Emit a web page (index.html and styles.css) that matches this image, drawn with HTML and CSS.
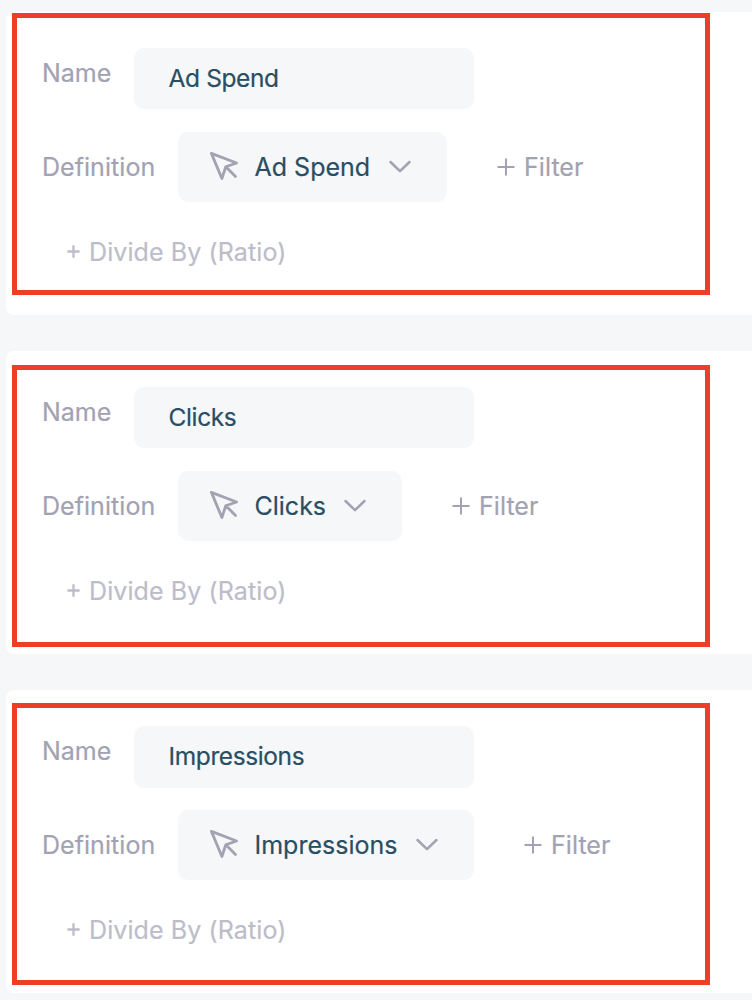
FILE: index.html
```
<!DOCTYPE html>
<html lang="en">
<head>
<meta charset="utf-8">
<title>Metrics</title>
<link rel="stylesheet" href="styles.css">
</head>
<body>
<svg width="0" height="0" class="defs">
<symbol id="cursor" viewBox="0 0 32 32"><path d="M3.4 3.4 28.6 13 17.8 16.7 13.9 28.5ZM17.8 16.7 27.5 26.4"/></symbol>
<symbol id="chevron" viewBox="0 0 24 16"><path d="M2.5 3 12 12.2 21.5 3"/></symbol>
<symbol id="plus" viewBox="0 0 18 18"><path d="M9 .5v17M.5 9h17"/></symbol>
</svg>
<main class="list">
<section class="card">
<div class="outline"></div>
<div class="row name-row"><span class="label name">Name</span><div class="input">Ad Spend</div></div>
<div class="row def-row"><span class="label definition">Definition</span><div class="chip chip-spend"><svg class="cursor"><use href="#cursor"/></svg><span class="chip-text">Ad Spend</span><svg class="chevron"><use href="#chevron"/></svg></div><div class="filter"><svg class="plus"><use href="#plus"/></svg><span>Filter</span></div></div>
<div class="ratio"><svg class="plus-small"><use href="#plus"/></svg><span>Divide By (Ratio)</span></div>
</section>
<section class="card">
<div class="outline outline-mid"></div>
<div class="row name-row"><span class="label name">Name</span><div class="input">Clicks</div></div>
<div class="row def-row"><span class="label definition">Definition</span><div class="chip chip-clicks"><svg class="cursor"><use href="#cursor"/></svg><span class="chip-text">Clicks</span><svg class="chevron"><use href="#chevron"/></svg></div><div class="filter"><svg class="plus"><use href="#plus"/></svg><span>Filter</span></div></div>
<div class="ratio"><svg class="plus-small"><use href="#plus"/></svg><span>Divide By (Ratio)</span></div>
</section>
<section class="card">
<div class="outline outline-last"></div>
<div class="row name-row"><span class="label name">Name</span><div class="input input-last">Impressions</div></div>
<div class="row def-row"><span class="label definition">Definition</span><div class="chip chip-impressions"><svg class="cursor"><use href="#cursor"/></svg><span class="chip-text">Impressions</span><svg class="chevron"><use href="#chevron"/></svg></div><div class="filter"><svg class="plus"><use href="#plus"/></svg><span>Filter</span></div></div>
<div class="ratio"><svg class="plus-small"><use href="#plus"/></svg><span>Divide By (Ratio)</span></div>
</section>
</main>
</body>
</html>
```
FILE: styles.css
```
* { box-sizing: border-box; }
body { margin: 0; background: #f5f7f9; font-family: Inter, "Liberation Sans", sans-serif; font-size: 25px; line-height: 30px; color: #a2a2b3; -webkit-text-stroke: 0.2px currentColor; overflow: hidden; white-space: nowrap; }
.defs { position: absolute; }
svg { fill: none; stroke: #a2a2b3; flex: none; }
.list { height: 1000px; padding: 12px 0 0 6px; display: flex; flex-direction: column; gap: 36px; }
.card { position: relative; flex: none; height: 303px; padding: 36px 0 0 36px; background: #fff; border-radius: 8px 0 0 8px; }
.outline { position: absolute; left: 6px; top: 1px; width: 698px; height: 282px; border: 5px solid #eb4026; }
.outline-mid { top: 14px; }
.outline-last { top: 13px; }
.row { display: flex; align-items: center; }
.name-row { height: 61px; align-items: flex-start; }
.name { width: 92px; padding-top: 10px; }
.input { width: 340px; height: 61px; padding: 15px 0 0 34.6px; border-radius: 10px; background: #f5f7f9; color: #294e63; font-size: 24.5px; letter-spacing: -0.4px; }
.input-last { height: 62px; }
.def-row { height: 70px; margin-top: 23px; }
.definition { width: 136px; letter-spacing: 0.05px; }
.chip { display: flex; align-items: center; height: 70px; padding-left: 30px; border-radius: 10px; background: #f5f7f9; color: #294e63; }
.chip-spend { width: 269px; }
.chip-clicks { width: 224px; }
.chip-impressions { width: 296px; }
.cursor { width: 32px; height: 32px; margin-bottom: 2px; stroke-width: 2.8; stroke-linejoin: round; stroke-linecap: round; }
.chip-text { margin-left: 14.5px; }
.chevron { width: 24px; height: 16px; margin: 0 35px 0 auto; stroke-width: 2.5; stroke-linecap: round; stroke-linejoin: round; }
.filter { display: flex; align-items: center; gap: 9px; margin-left: 50px; letter-spacing: 0.05px; }
.plus { width: 18px; height: 18px; stroke-width: 2; }
.ratio { display: flex; align-items: center; gap: 9px; margin: 35px 0 0 25px; letter-spacing: 0.1px; opacity: .7; }
.plus-small { width: 13px; height: 13px; margin-bottom: 1px; stroke-width: 3.2; }
```
